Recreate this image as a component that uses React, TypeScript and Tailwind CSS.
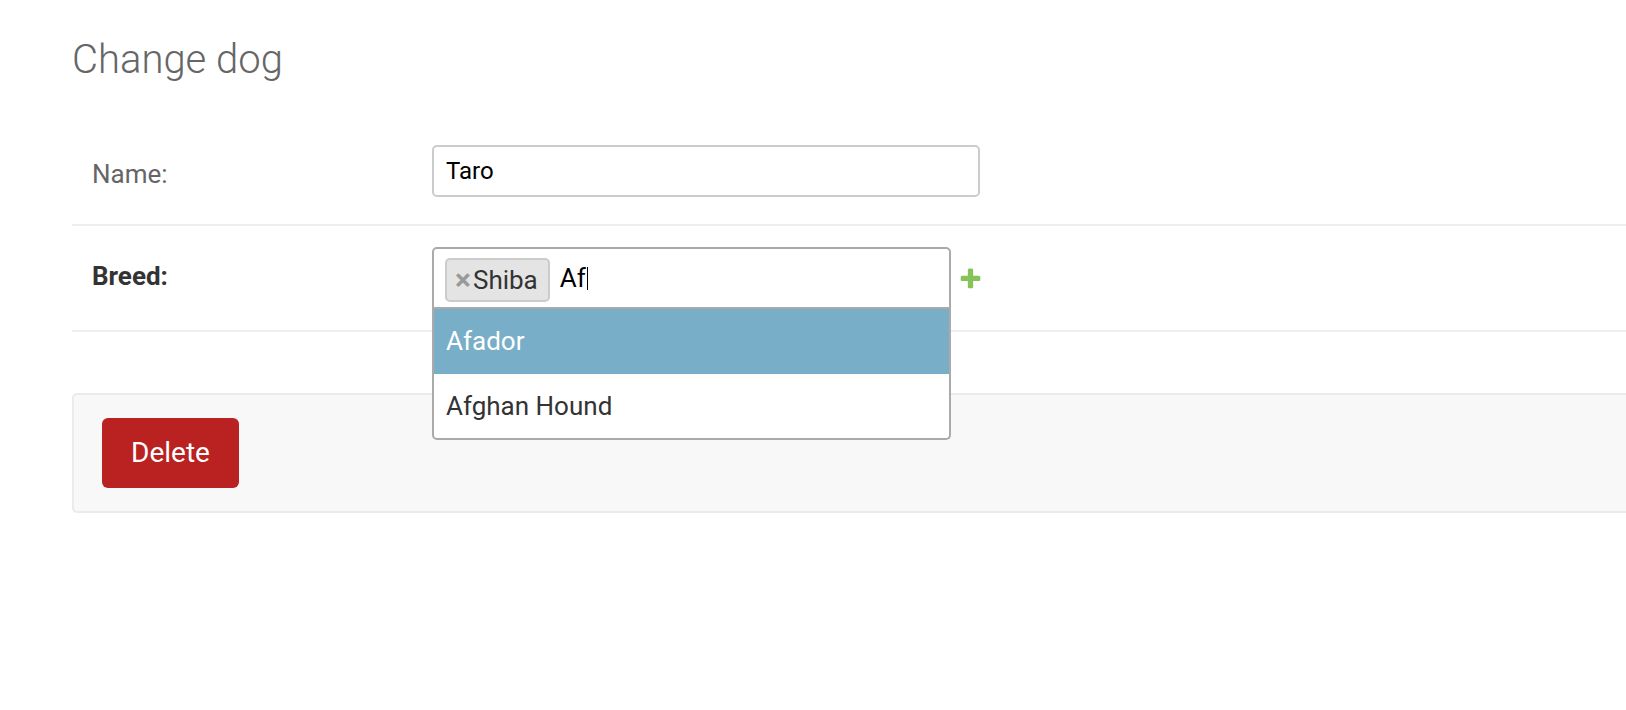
import React from 'react';

const AddIcon: React.FC = () => (
    <svg width="25" height="25" viewBox="0 0 1792 1792" className="shrink-0">
        <path
            fill="#86c45a"
            d="M1600 796v192q0 40-28 68t-68 28h-416v416q0 40-28 68t-68 28h-192q-40 0-68-28t-28-68v-416h-416q-40 0-68-28t-28-68v-192q0-40 28-68t68-28h416v-416q0-40 28-68t68-28h192q40 0 68 28t28 68v416h416q40 0 68 28t28 68z"
        />
    </svg>
);

export default function App() {
    return (
        <div className="min-h-[710px] bg-white overflow-hidden font-['Roboto','Liberation_Sans',sans-serif]">
            <div className="pl-[72px] -mr-[20px] pt-[36px]">
                {/* Title */}
                <h1 className="text-[40px] leading-[48px] font-light text-[#666] mb-[40px]">Change dog</h1>

                {/* Fieldset */}
                <div>
                    <div className="flex items-start border-b-2 border-[#eee] pl-[20px] pt-[21px] pb-[27px]">
                        <label className="w-[340px] shrink-0 pt-[16px] text-[26px] leading-[26px] text-[#666]">Name:</label>
                        <input
                            value="Taro"
                            readOnly
                            className="w-[548px] h-[52px] border-2 border-[#ccc] rounded-[5px] px-[12px] text-[24px] text-black outline-none"
                        />
                    </div>

                    <div className="flex items-start border-b-2 border-[#eee] pl-[20px] py-[21px]">
                        <label className="w-[340px] shrink-0 pt-[16px] text-[26px] leading-[26px] font-bold text-[#333]">Breed:</label>
                        <div className="flex items-start">
                            <div className="relative w-[519px]">
                                <div className="h-[62px] border-2 border-[#aaa] rounded-t-[5px] flex items-center pl-[11px]">
                                    <span className="mt-[4px] h-[44px] flex items-center border-2 border-[#ccc] bg-[#e4e4e4] rounded-[5px] pl-[8px] pr-[10px] text-[26px] leading-[40px] text-[#333]">
                                        <span className="font-bold text-[30px] text-[#999] mr-[2px]">×</span>
                                        Shiba
                                    </span>
                                    <span className="ml-[10px] flex items-center text-[26px] text-black">
                                        Af
                                        <span className="ml-[1px] w-[1.5px] h-[23px] bg-black" />
                                    </span>
                                </div>
                                {/* Autocomplete dropdown */}
                                <div className="absolute left-0 right-0 top-full z-10 bg-white border-2 border-t-0 border-[#aaa] rounded-b-[5px] overflow-hidden">
                                    <div className="h-[65px] flex items-center px-[12px] bg-[#79aec8] text-white text-[26px]">Afador</div>
                                    <div className="h-[64px] flex items-center px-[12px] text-[#333] text-[26px]">Afghan Hound</div>
                                </div>
                            </div>
                            <div className="ml-[7px] mt-[19px]">
                                <AddIcon />
                            </div>
                        </div>
                    </div>
                </div>

                {/* Submit row */}
                <div className="mt-[61px] border-2 border-[#ebebeb] bg-[#f8f8f8] rounded-[5px] px-[28px] py-[23px]">
                    <button className="h-[70px] px-[29px] bg-[#ba2121] rounded-[6px] text-white text-[28px]">Delete</button>
                </div>
            </div>
        </div>
    );
}
